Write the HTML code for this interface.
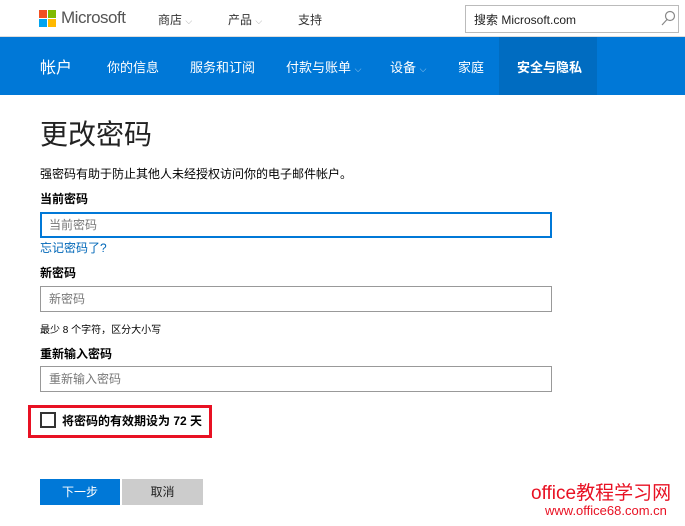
<!DOCTYPE html>
<html><head><meta charset="utf-8"><style>
*{margin:0;padding:0;box-sizing:border-box}
body{width:685px;height:526px;overflow:hidden;background:#fff;font-family:"Liberation Sans","Noto Sans CJK SC",sans-serif;color:#000;position:relative}
.a{position:absolute;white-space:nowrap}
.top{position:absolute;left:0;top:0;width:685px;height:37px;border-bottom:1px solid #ddd}
.nav{position:absolute;left:0;top:37px;width:685px;height:58px;background:#0078d7;color:#fff;font-size:13px}
.inp{position:absolute;left:40px;width:512px;height:26px;border:1px solid #999;font-size:12px;color:#777;padding:0 8px;line-height:24px}
</style></head><body>
<div class="top">
 <div class="a" style="left:39px;top:10px;width:8px;height:8px;background:#f25022"></div>
 <div class="a" style="left:48px;top:10px;width:8px;height:8px;background:#7fba00"></div>
 <div class="a" style="left:39px;top:19px;width:8px;height:8px;background:#00a4ef"></div>
 <div class="a" style="left:48px;top:19px;width:8px;height:8px;background:#ffb900"></div>
 <div class="a" style="left:61px;top:8px;font-size:17px;color:#555;letter-spacing:-0.5px">Microsoft</div>
 <div class="a" style="left:158px;top:11px;font-size:12px;color:#333">商店 <span style="color:#aaa;font-size:9px">⌵</span></div>
 <div class="a" style="left:228px;top:11px;font-size:12px;color:#333">产品 <span style="color:#aaa;font-size:9px">⌵</span></div>
 <div class="a" style="left:298px;top:11px;font-size:12px;color:#333">支持</div>
 <div class="a" style="left:465px;top:5px;width:214px;height:28px;border:1px solid #bbb"></div>
 <div class="a" style="left:474px;top:11px;font-size:12px;color:#222">搜索 Microsoft.com</div>
 <svg class="a" style="left:660px;top:10px" width="16" height="16"><circle cx="10" cy="6" r="4.5" fill="none" stroke="#888" stroke-width="1.2"/><line x1="7" y1="9.5" x2="2" y2="15" stroke="#888" stroke-width="1.2"/></svg>
</div>
<div class="nav">
 <div class="a" style="left:499px;top:0;width:98px;height:58px;background:#006cc1"></div>
 <div class="a" style="left:40px;top:17px;font-size:16px">帐户</div>
 <div class="a" style="left:107px;top:20px">你的信息</div>
 <div class="a" style="left:190px;top:20px">服务和订阅</div>
 <div class="a" style="left:286px;top:20px">付款与账单 <span style="font-size:9px;opacity:.6">⌵</span></div>
 <div class="a" style="left:390px;top:20px">设备 <span style="font-size:9px;opacity:.6">⌵</span></div>
 <div class="a" style="left:458px;top:20px">家庭</div>
 <div class="a" style="left:517px;top:20px;font-weight:bold">安全与隐私</div>
</div>
<div class="a" style="left:40px;top:113px;font-size:28px;color:#222">更改密码</div>
<div class="a" style="left:40px;top:165px;font-size:12px">强密码有助于防止其他人未经授权访问你的电子邮件帐户。</div>
<div class="a" style="left:40px;top:190px;font-size:12px;font-weight:bold">当前密码</div>
<div class="inp" style="top:212px;border:2px solid #0078d7;padding:0 7px;line-height:22px">当前密码</div>
<div class="a" style="left:40px;top:239px;font-size:12px;color:#0067b8">忘记密码了?</div>
<div class="a" style="left:40px;top:264px;font-size:12px;font-weight:bold">新密码</div>
<div class="inp" style="top:286px">新密码</div>
<div class="a" style="left:40px;top:321px;font-size:10px">最少 8 个字符，区分大小写</div>
<div class="a" style="left:40px;top:345px;font-size:12px;font-weight:bold">重新输入密码</div>
<div class="inp" style="top:366px">重新输入密码</div>
<div class="a" style="left:28px;top:405px;width:184px;height:33px;border:3px solid #e81123"></div>
<div class="a" style="left:40px;top:412px;width:16px;height:16px;border:2px solid #333"></div>
<div class="a" style="left:62px;top:412px;font-size:12px;font-weight:bold">将密码的有效期设为 72 天</div>
<div class="a" style="left:40px;top:479px;width:80px;height:26px;background:#0078d7;color:#fff;font-size:12px;text-align:center;line-height:26px">下一步</div>
<div class="a" style="left:122px;top:479px;width:81px;height:26px;background:#ccc;color:#222;font-size:12px;text-align:center;line-height:26px">取消</div>
<div class="a" style="left:531px;top:478px;font-size:19px;color:#e81123">office教程学习网</div>
<div class="a" style="left:545px;top:503px;font-size:13px;color:#e81123">www.office68.com.cn</div>
</body></html>
